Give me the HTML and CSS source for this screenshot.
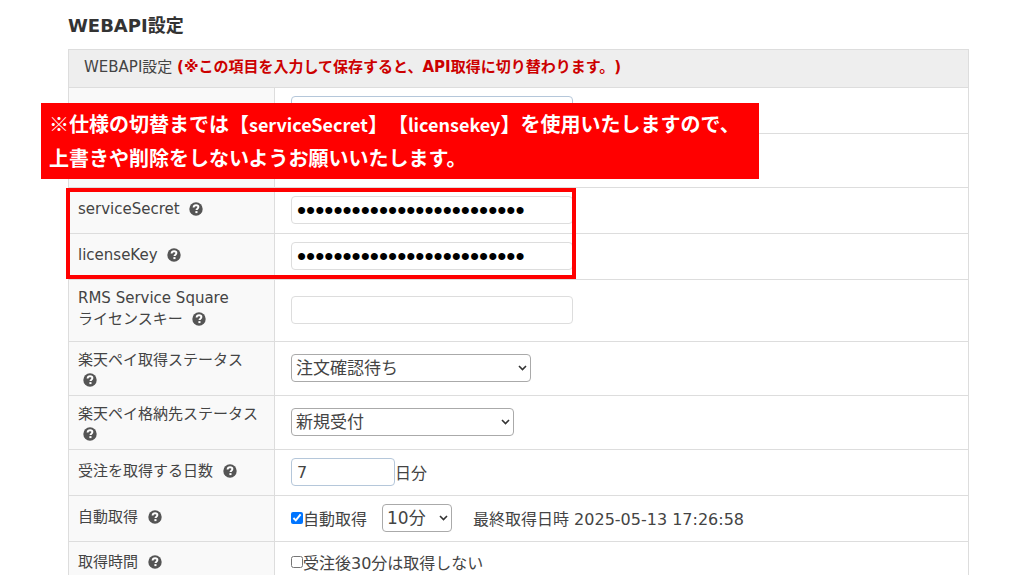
FILE: index.html
```html
<!DOCTYPE html>
<html lang="ja">
<head>
    <meta charset="UTF-8">
    <meta name="viewport" content="width=device-width, initial-scale=1.0">
    <title>WEBAPI設定</title>
    <link rel="stylesheet" href="styles.css">
</head>
<body>
    <!-- help icon used by every label -->
    <svg class="defs" width="0" height="0">
        <symbol id="help" viewBox="0 0 14 14">
            <circle cx="7" cy="7" r="6.7" fill="#555"/>
            <path d="M4.6 5.5C4.7 4 5.7 3.2 7.1 3.2c1.3 0 2.3.8 2.3 1.9 0 1.6-1.9 1.5-1.9 3" fill="none" stroke="#fff" stroke-width="1.9"/>
            <rect x="6.4" y="9.1" width="2.1" height="2" fill="#fff"/>
        </symbol>
    </svg>

    <div id="container">
        <h1>WEBAPI設定</h1>
        <div class="settings">
            <table>
                <colgroup>
                    <col class="labels">
                    <col>
                </colgroup>
                <thead>
                    <tr>
                        <th colspan="2">WEBAPI設定 <strong>(※この項目を入力して保存すると、API取得に切り替わります。)</strong></th>
                    </tr>
                </thead>
                <tbody>
                    <tr class="first">
                        <th><label for="shopName">ショップ名称</label></th>
                        <td><input type="text" id="shopName" class="active"></td>
                    </tr>
                    <tr class="tall">
                        <th></th>
                        <td></td>
                    </tr>
                    <tr>
                        <th><label for="serviceSecret">serviceSecret</label> <svg class="help"><use href="#help"/></svg></th>
                        <td><input type="password" id="serviceSecret" value="aaaaaaaaaaaaaaaaaaaaaaaaa"></td>
                    </tr>
                    <tr>
                        <th><label for="licenseKey">licenseKey</label> <svg class="help"><use href="#help"/></svg></th>
                        <td><input type="password" id="licenseKey" value="aaaaaaaaaaaaaaaaaaaaaaaaa"></td>
                    </tr>
                    <tr class="double">
                        <th><label for="rmsKey">RMS Service Square<br>ライセンスキー</label> <svg class="help"><use href="#help"/></svg></th>
                        <td><input type="text" id="rmsKey"></td>
                    </tr>
                    <tr class="tall">
                        <th><label for="getStatus">楽天ペイ取得ステータス</label><br><svg class="help"><use href="#help"/></svg></th>
                        <td>
                            <select id="getStatus" class="wide">
                                <option>注文確認待ち</option>
                            </select>
                        </td>
                    </tr>
                    <tr class="tall">
                        <th><label for="storeStatus">楽天ペイ格納先ステータス</label><br><svg class="help"><use href="#help"/></svg></th>
                        <td>
                            <select id="storeStatus" class="medium">
                                <option>新規受付</option>
                            </select>
                        </td>
                    </tr>
                    <tr>
                        <th><label for="days">受注を取得する日数</label> <svg class="help"><use href="#help"/></svg></th>
                        <td><div class="line"><input type="text" id="days" class="active short" value="7">日分</div></td>
                    </tr>
                    <tr>
                        <th>自動取得 <svg class="help"><use href="#help"/></svg></th>
                        <td>
                            <div class="line">
                                <input type="checkbox" id="auto" checked><label for="auto">自動取得</label>
                                <select class="small" aria-label="取得間隔">
                                    <option>10分</option>
                                </select>
                                <span>最終取得日時 2025-05-13 17:26:58</span>
                            </div>
                        </td>
                    </tr>
                    <tr class="compact">
                        <th>取得時間 <svg class="help"><use href="#help"/></svg></th>
                        <td><div class="line"><input type="checkbox" id="delay"><label for="delay">受注後30分は取得しない</label></div></td>
                    </tr>
                </tbody>
            </table>
            <div class="highlight"></div>
            <p class="notice">※仕様の切替までは【<span>serviceSecret</span>】【<span>licensekey</span>】を使用いたしますので、<br>上書きや削除をしないようお願いいたします。</p>
        </div>
    </div>
</body>
</html>
```

FILE: styles.css
```css
* {
    box-sizing: border-box;
}

body {
    margin: 0;
    background: #fff;
    color: #444;
    font-family: Verdana, "DejaVu Sans", "Noto Sans CJK JP", sans-serif;
    font-size: 16px;
    text-spacing-trim: space-all;
    overflow: hidden;
}

.defs {
    position: absolute;
}

#container {
    padding: 12px 55px 0 68px;
}

h1 {
    margin: 0 0 9px;
    font-size: 18px;
    line-height: 28px;
    color: #333;
}

.settings {
    position: relative;
}

table {
    width: 100%;
    border-collapse: collapse;
    table-layout: fixed;
}

.labels {
    width: 206px;
}

th, td {
    border: 1px solid #ddd;
    padding: 0 15px;
    text-align: left;
    vertical-align: top;
}

td {
    padding: 8px 16px 0;
}

thead th {
    height: 38px;
    background: #eee;
    font-size: 15px;
    font-weight: normal;
    line-height: 35px;
}

thead strong {
    color: #c00;
}

tbody th {
    height: 46px;
    padding: 11px 9px 0;
    background: #f9f9f9;
    font-size: 15px;
    font-weight: normal;
    line-height: 20px;
}

.first th {
    padding-top: 13px;
}

.tall th {
    height: 54px;
    padding-top: 8px;
}

.tall td {
    padding-top: 12px;
}

.double th {
    height: 62px;
    padding-top: 8px;
    line-height: 21px;
}

.double td {
    padding-top: 16px;
}

.compact th {
    padding-top: 10px;
}

.help {
    width: 14px;
    height: 14px;
    margin-left: 5px;
    vertical-align: -2px;
}

input[type="text"], input[type="password"], select {
    display: block;
    height: 28px;
    border: 1px solid #ddd;
    border-radius: 4px;
    background: #fff;
    color: #444;
    font-family: inherit;
    font-size: 16px;
}

input[type="text"], input[type="password"] {
    width: 282px;
    padding: 0 5px;
}

input[type="password"] {
    color: #000;
    font-family: "Liberation Sans", sans-serif;
    font-size: 26px;
}

input.active {
    border-color: #b5c7da;
}

input.short {
    width: 104px;
}

input[type="checkbox"] {
    width: 12px;
    height: 12px;
    margin: 0;
}

select {
    appearance: none;
    flex: none;
    padding: 0 4px;
    border-color: #aaa;
    font-size: 17px;
    line-height: 24px;
    background: #fff url("data:image/svg+xml,%3Csvg xmlns='http://www.w3.org/2000/svg' width='9' height='6'%3E%3Cpath d='M1 1l3.5 3.5L8 1' fill='none' stroke='%23333' stroke-width='1.6'/%3E%3C/svg%3E") no-repeat right 3px center;
}

.wide {
    width: 240px;
}

.medium {
    width: 223px;
}

.small {
    width: 70px;
    margin: 0 21px 0 15px;
}

.line {
    display: flex;
    align-items: center;
    white-space: nowrap;
}

.highlight {
    position: absolute;
    top: 139px;
    left: -2px;
    width: 510px;
    height: 91px;
    border: 4px solid #f00;
}

.notice {
    position: absolute;
    top: 54px;
    left: -27px;
    width: 718px;
    margin: 0;
    padding: 4px 8px;
    background: #f00;
    color: #fff;
    font-family: "Noto Sans CJK JP", sans-serif;
    font-size: 20px;
    font-weight: bold;
    line-height: 34px;
    white-space: nowrap;
}

.notice span {
    font-size: 18px;
}
```
